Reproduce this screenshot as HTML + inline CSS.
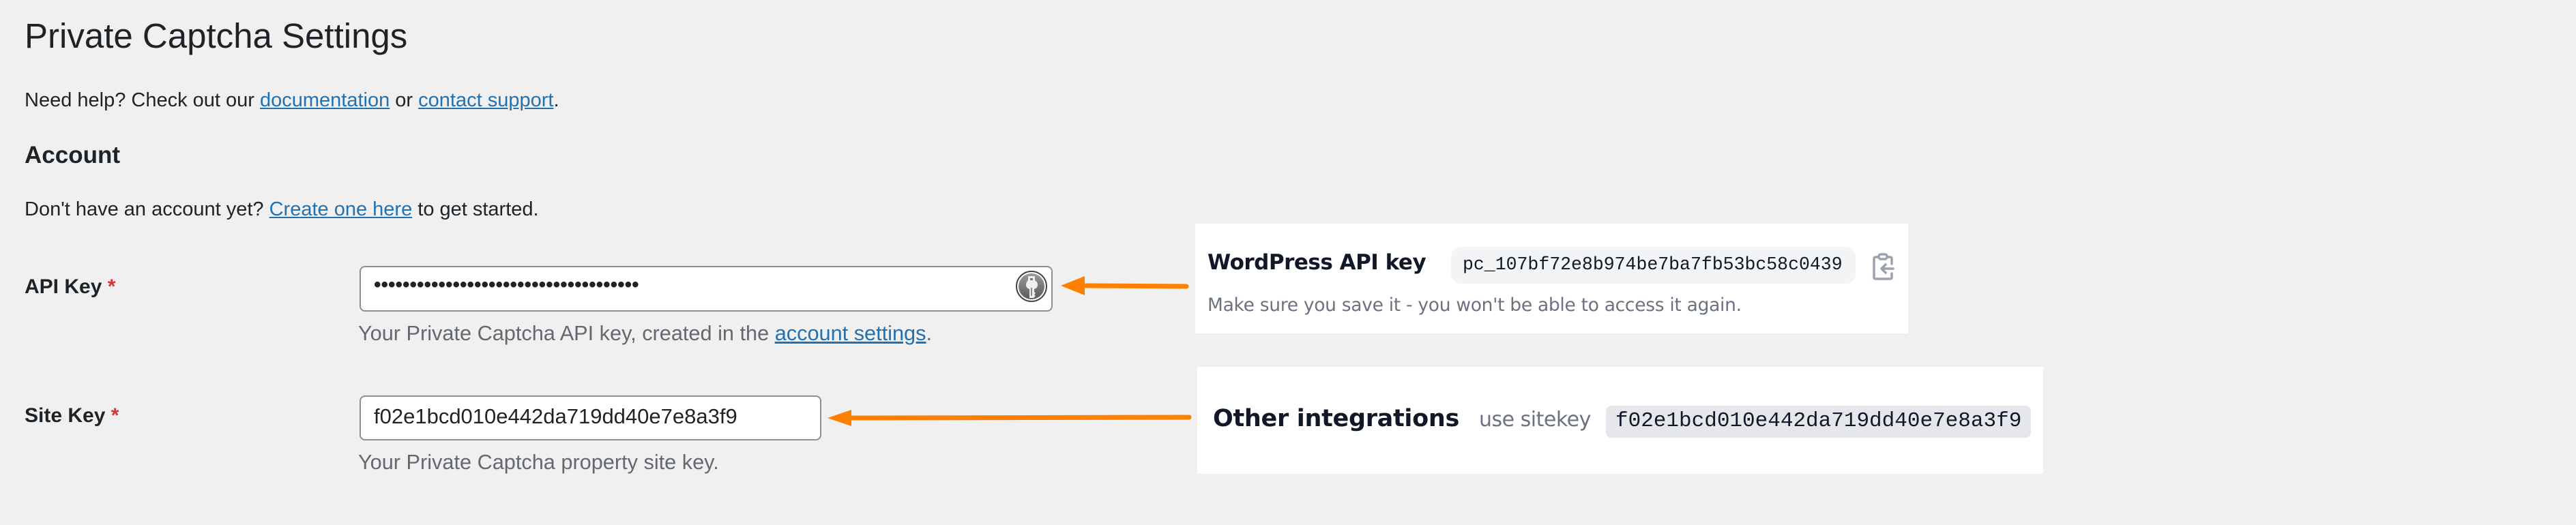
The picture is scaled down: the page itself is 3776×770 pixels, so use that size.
<!DOCTYPE html>
<html><head><meta charset="utf-8"><style>
html,body{margin:0;padding:0;}
body{width:3776px;height:770px;background:#f0f0f1;position:relative;overflow:hidden;font-family:"Liberation Sans",sans-serif;color:#1d2327;}
.a{position:absolute;white-space:nowrap;}
a{color:#2271b1;text-decoration:underline;}
.lbl{font-weight:bold;font-size:30px;}
.req{color:#d63638;}
.help{color:#646970;}
.mono{font-family:"Liberation Mono",monospace;}
</style></head><body>
<div class="a" style="left:36px;top:23px;font-size:51px;">Private Captcha Settings</div>
<div class="a" style="left:36px;top:131px;font-size:29px;">Need help? Check out our <a>documentation</a> or <a>contact support</a>.</div>
<div class="a" style="left:36px;top:208px;font-size:35px;font-weight:bold;">Account</div>
<div class="a" style="left:36px;top:291px;font-size:29px;">Don't have an account yet? <a>Create one here</a> to get started.</div>

<div class="a lbl" style="left:36px;top:404px;">API Key <span class="req">*</span></div>
<div class="a" style="left:527px;top:390px;width:1012px;height:63px;background:#fff;border:2px solid #8c8f94;border-radius:8px;"></div>
<div class="a" style="left:548px;top:401px;font-size:30px;font-weight:bold;letter-spacing:0px;">•••••••••••••••••••••••••••••••••••••</div>
<svg class="a" style="left:1488px;top:396px" width="48" height="48" viewBox="0 0 48 48">
<defs><linearGradient id="g" x1="0" y1="0" x2="0" y2="1"><stop offset="0" stop-color="#9a9a9a"/><stop offset="1" stop-color="#5a5a5a"/></linearGradient></defs>
<circle cx="24" cy="24" r="22" fill="#fff" stroke="#444" stroke-width="2"/>
<circle cx="24" cy="24" r="19" fill="url(#g)"/>
<path d="M19 9h10v6c3 2 4 4 4 7s-2 5-5 6v4l2 2-2 2 2 2-3 3h-6V28c-3-1-5-3-5-6s1-5 3-7z" fill="#eee"/>
<rect x="22" y="12" width="4" height="3" fill="#777"/>
<rect x="23" y="26" width="2" height="12" fill="#888"/>
</svg>
<div class="a help" style="left:525px;top:471px;font-size:30.7px;">Your Private Captcha API key, created in the <a>account settings</a>.</div>

<div class="a lbl" style="left:36px;top:593px;">Site Key <span class="req">*</span></div>
<div class="a" style="left:527px;top:580px;width:673px;height:62px;background:#fff;border:2px solid #8c8f94;border-radius:8px;"></div>
<div class="a" style="left:548px;top:593px;font-size:31px;">f02e1bcd010e442da719dd40e7e8a3f9</div>
<div class="a help" style="left:525px;top:660px;font-size:30.7px;">Your Private Captcha property site key.</div>

<svg class="a" style="left:0;top:0" width="3776" height="770">
<line x1="1592" y1="419" x2="1739" y2="420" stroke="#ff7f00" stroke-width="7" stroke-linecap="round"/>
<polygon points="1555,419 1590,405 1590,433" fill="#ff7f00"/>
<line x1="1246" y1="613" x2="1743" y2="612" stroke="#ff7f00" stroke-width="7" stroke-linecap="round"/>
<polygon points="1213,613 1248,601 1248,625" fill="#ff7f00"/>
</svg>

<div class="a" style="left:1752px;top:328px;width:1045px;height:161px;background:#fff;"></div>
<div class="a" style="left:1770px;top:367px;font-size:31px;font-weight:bold;color:#111827;font-family:'DejaVu Sans',sans-serif;letter-spacing:-0.5px;">WordPress API key</div>
<div class="a" style="left:2127px;top:362px;width:593px;height:54px;background:#f3f4f6;border-radius:14px;"></div>
<div class="a mono" style="left:2144px;top:373px;font-size:26.5px;color:#111827;">pc_107bf72e8b974be7ba7fb53bc58c0439</div>
<svg class="a" style="left:2744px;top:371px" width="34" height="40" viewBox="0 0 34 40" fill="none" stroke="#9ca3af" stroke-width="3.5" stroke-linecap="round" stroke-linejoin="round">
<path d="M9 6H5a2 2 0 0 0-2 2v28a2 2 0 0 0 2 2h22a2 2 0 0 0 2-2v-6M29 16V8a2 2 0 0 0-2-2h-4"/>
<rect x="10" y="2" width="12" height="7" rx="3"/>
<path d="M31 23H15M20 17l-6 6 6 6"/>
</svg>
<div class="a" style="left:1770px;top:432px;font-size:26.5px;color:#6b7280;font-family:'DejaVu Sans',sans-serif;letter-spacing:-0.3px;">Make sure you save it - you won't be able to access it again.</div>

<div class="a" style="left:1755px;top:538px;width:1240px;height:157px;background:#fff;"></div>
<div class="a" style="left:1778px;top:594px;font-size:35px;font-weight:bold;color:#111827;font-family:'DejaVu Sans',sans-serif;letter-spacing:-0.3px;">Other integrations</div>
<div class="a" style="left:2168px;top:598px;font-size:30px;color:#6b7280;font-family:'DejaVu Sans',sans-serif;letter-spacing:-0.5px;">use sitekey</div>
<div class="a" style="left:2354px;top:595px;width:623px;height:47px;background:#e5e7eb;border-radius:8px;"></div>
<div class="a mono" style="left:2368px;top:600px;font-size:31px;color:#111827;">f02e1bcd010e442da719dd40e7e8a3f9</div>
</body></html>
